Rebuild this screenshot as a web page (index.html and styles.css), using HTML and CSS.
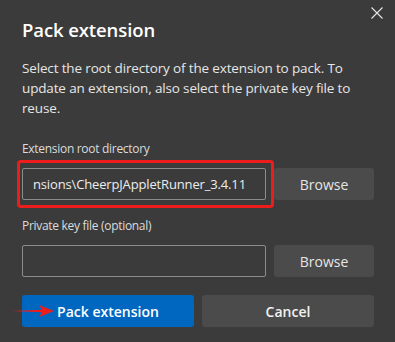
FILE: index.html
```html
<!DOCTYPE html>
<html lang="en">
<head>
    <meta charset="UTF-8">
    <meta name="viewport" content="width=device-width, initial-scale=1.0">
    <title>Pack extension</title>
    <link rel="stylesheet" href="styles.css">
</head>
<body>
    <div class="dialog">
        <button class="close-button" aria-label="Close">
            <svg width="12" height="12" viewBox="0 0 12 12">
                <path d="M0.5 0.5 L11.5 11.5 M11.5 0.5 L0.5 11.5" stroke="#e6e6e6" stroke-width="1.1" fill="none"/>
            </svg>
        </button>

        <h1>Pack extension</h1>
        <p class="intro">Select the root directory of the extension to pack. To update an extension, also select the private key file to reuse.</p>

        <div class="field">
            <label class="field-label">Extension root directory</label>
            <div class="field-row">
                <div class="highlight">
                    <input class="text-input" type="text" value="nsions\CheerpJAppletRunner_3.4.11">
                </div>
                <button class="secondary-button">Browse</button>
            </div>
        </div>

        <div class="field">
            <label class="field-label">Private key file (optional)</label>
            <div class="field-row">
                <input class="text-input" type="text" value="">
                <button class="secondary-button">Browse</button>
            </div>
        </div>

        <div class="actions">
            <div class="primary-wrap">
                <button class="primary-button">Pack extension</button>
                <svg class="pointer-arrow" width="44" height="14" viewBox="0 0 44 14">
                    <path d="M0 7 L30 5.8 L27 1 L42 7 L27 13 L30 8.2 Z" fill="#ee1d1d"/>
                </svg>
            </div>
            <button class="secondary-button wide">Cancel</button>
        </div>
    </div>
</body>
</html>
```

FILE: styles.css
```css
body {
    margin: 0;
    background-color: #3b3b3b;
    color: #e6e6e6;
    font-family: 'Open Sans', 'Noto Sans', sans-serif;
}
.dialog {
    position: relative;
    box-sizing: border-box;
    width: 395px;
    padding: 15px 21px 15px 22px;
}
.close-button {
    position: absolute;
    top: 6px;
    right: 11px;
    width: 14px;
    height: 14px;
    padding: 1px;
    border: none;
    background: none;
    line-height: 0;
}
h1 {
    margin: 0 0 13px 0;
    font-size: 18.5px;
    font-weight: 600;
    color: #ffffff;
    line-height: 30px;
    letter-spacing: -0.1px;
}
.intro {
    margin: 0 0 22px 0;
    font-size: 13.5px;
    line-height: 20px;
    letter-spacing: -0.15px;
    color: #e6e6e6;
}
.field {
    margin-bottom: 17px;
}
.field-label {
    display: block;
    font-size: 12px;
    line-height: 18px;
    letter-spacing: -0.3px;
    color: #dcdcdc;
    margin-bottom: 10px;
}
.field-row {
    display: flex;
    gap: 8px;
}
.highlight {
    position: relative;
    display: flex;
}
.highlight::after {
    content: '';
    position: absolute;
    top: -8px;
    left: -5px;
    right: -8px;
    bottom: -8px;
    border: 3px solid #ee1d1d;
    border-radius: 4px;
    pointer-events: none;
}
.text-input {
    box-sizing: border-box;
    width: 244px;
    height: 32px;
    padding: 0 10px;
    background: #3b3b3b;
    border: 1px solid #8c8c8c;
    border-radius: 2px;
    color: #ededed;
    font-family: inherit;
    font-size: 13px;
    letter-spacing: -0.15px;
    outline: none;
}
.secondary-button {
    width: 100px;
    height: 32px;
    border: none;
    border-radius: 3px;
    background: #4b4b4b;
    color: #e6e6e6;
    font-family: inherit;
    font-size: 14px;
}
.secondary-button.wide {
    width: 172px;
    font-weight: 600;
    color: #f2f2f2;
}
.actions {
    display: flex;
    gap: 8px;
    padding-top: 1px;
}
.primary-wrap {
    position: relative;
}
.primary-button {
    width: 172px;
    height: 32px;
    border: none;
    border-radius: 3px;
    background: #0067c0;
    color: #ffffff;
    font-family: inherit;
    font-size: 14px;
    font-weight: 600;
}
.pointer-arrow {
    position: absolute;
    left: -10px;
    top: 9px;
}
```
